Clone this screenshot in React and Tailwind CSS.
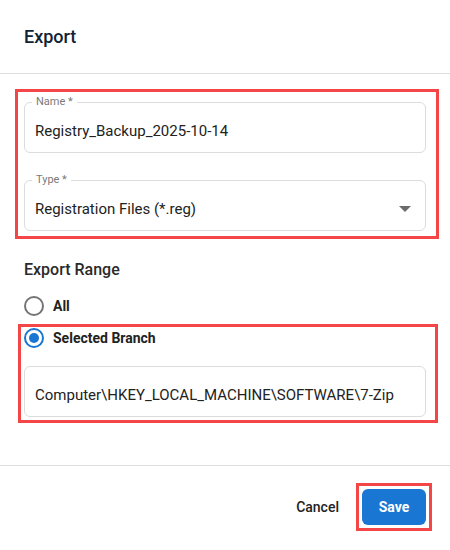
import React from "react";

function Field({ label, value, select }) {
  return (
    <div className="relative h-[51px] rounded-[6px] border border-[#dcdcdc] flex items-center pl-[10px] pr-[12px] pt-[7px]">
      {label && (
        <span className="absolute left-[7px] top-[-8px] bg-white px-[4px] text-[11px] leading-[14px] text-[#7a7a7a]">
          {label}
        </span>
      )}
      <span className="flex-1 text-[15px] text-[#222]">{value}</span>
      {select && (
        <svg width="12" height="6" viewBox="0 0 12 6" className="mr-[2px]">
          <path d="M0 0 L12 0 L6 6 Z" fill="#6b6b6b" />
        </svg>
      )}
    </div>
  );
}

function Radio({ checked, label }) {
  return (
    <div className="flex items-center gap-[9px] h-[20px]">
      <span
        className={
          "w-[20px] h-[20px] rounded-full border-2 flex items-center justify-center " +
          (checked ? "border-[#1976d2]" : "border-[#757575]")
        }
      >
        {checked && <span className="w-[10px] h-[10px] rounded-full bg-[#1976d2]" />}
      </span>
      <span className="text-[14px] font-bold text-[#222]">{label}</span>
    </div>
  );
}

export default function App() {
  return (
    <div
      className="w-[450px] h-[550px] bg-white flex flex-col"
      style={{ fontFamily: "Roboto, 'Liberation Sans', sans-serif" }}
    >
      <div className="h-[74px] flex items-center px-6 border-b border-[#dedede]">
        <span className="text-[18px] font-medium text-[#0f2236]">Export</span>
      </div>
      <div className="flex-1 flex flex-col pt-[15px]">
        <div className="mx-[15px] w-[424px] border-[3px] border-[#f44646] pl-[6px] pr-[10px] pt-[10px] pb-[5px] flex flex-col gap-[27px]">
          <Field label="Name *" value="Registry_Backup_2025-10-14" />
          <Field label="Type *" value="Registration Files (*.reg)" select />
        </div>
        <div className="px-6 mt-[20px] text-[16px] font-medium text-[#2a2a2a] leading-[22px]">
          Export Range
        </div>
        <div className="px-6 mt-[15px]">
          <Radio label="All" />
        </div>
        <div className="ml-[18px] w-[420px] mt-[8px] border-[3px] border-[#f44646] pl-[3px] pr-[9px] pt-[1px] pb-[3px] flex flex-col">
          <Radio checked label="Selected Branch" />
          <div className="mt-[18px] h-[51px] rounded-[6px] border border-[#dcdcdc] flex items-center pl-[10px] pt-[8px]">
            <span className="text-[15px] text-[#222]">Computer\HKEY_LOCAL_MACHINE\SOFTWARE\7-Zip</span>
          </div>
        </div>
      </div>
      <div className="h-[85px] border-t border-[#dedede] flex items-center justify-end pr-[18px] pb-[2px]">
        <span className="text-[14px] font-medium text-[#222] mr-[17px]">Cancel</span>
        <div className="border-[3px] border-[#f44646] p-[3px]">
          <div className="w-[64px] h-[36px] rounded-[6px] bg-[#1976d2] flex items-center justify-center">
            <span className="text-[14px] font-bold text-white">Save</span>
          </div>
        </div>
      </div>
    </div>
  );
}
